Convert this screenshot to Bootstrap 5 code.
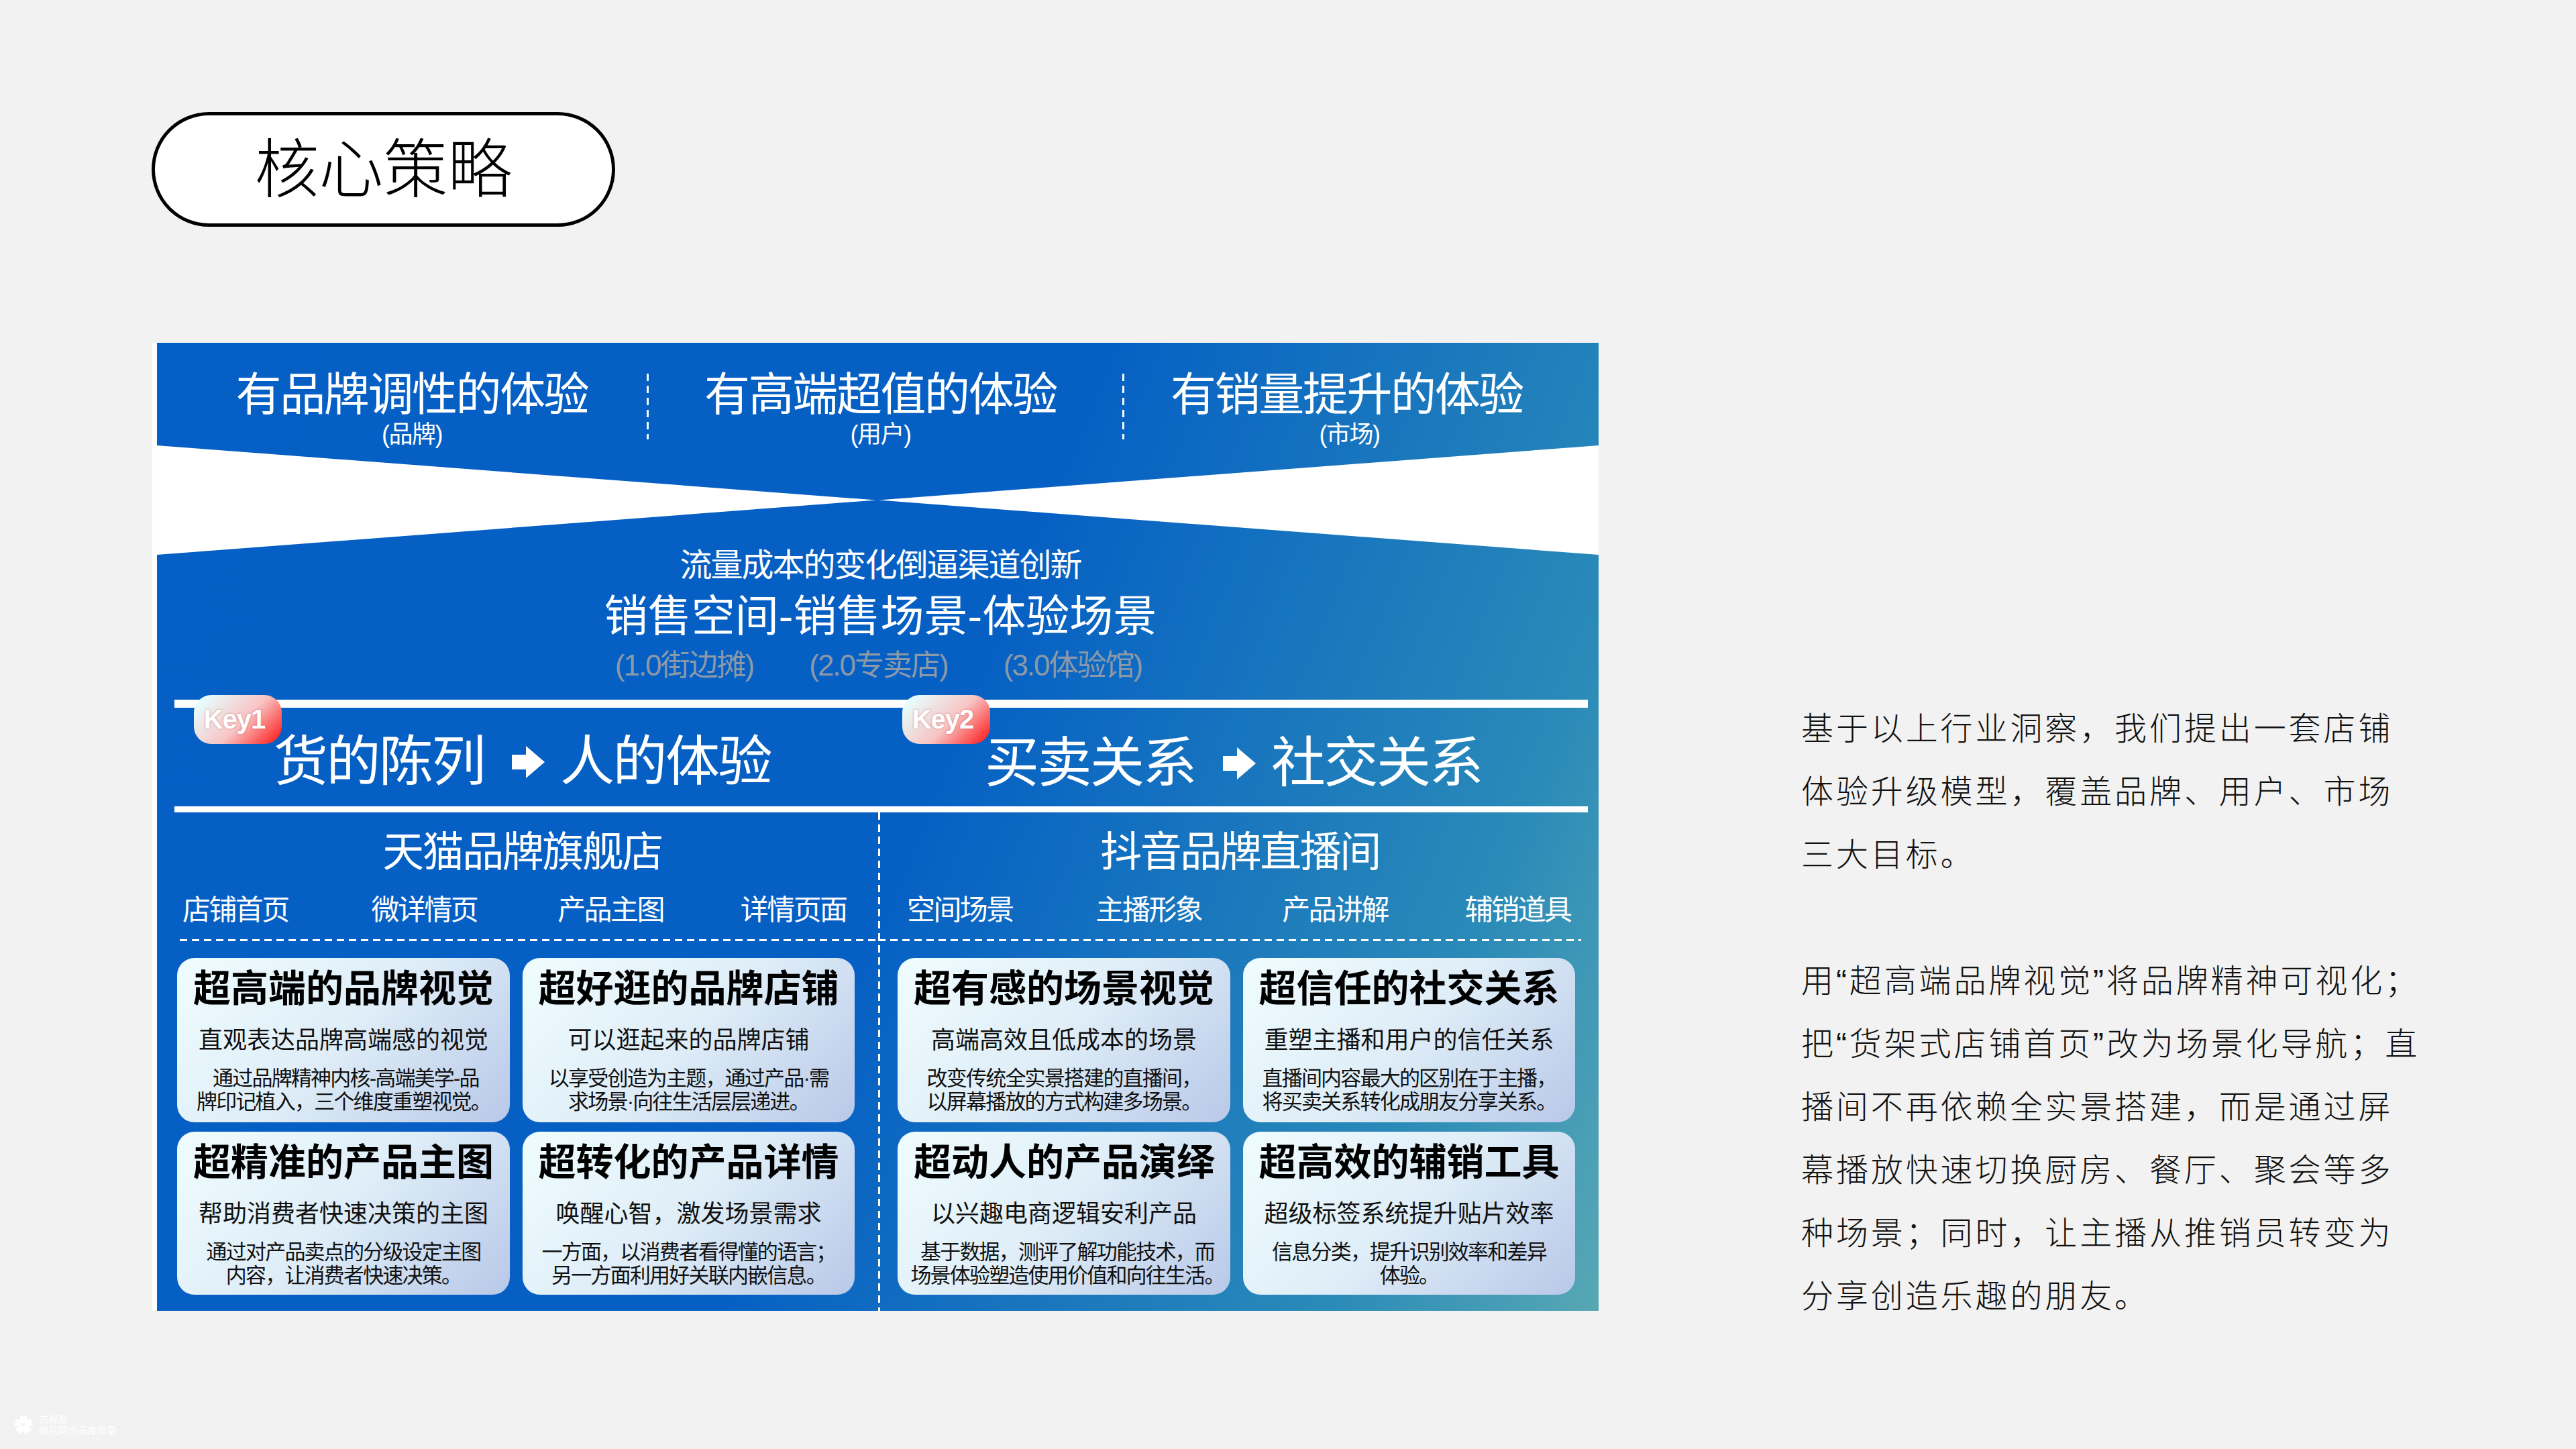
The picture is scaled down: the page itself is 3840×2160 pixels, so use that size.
<!DOCTYPE html>
<html lang="zh-CN">
<head>
    <meta charset="UTF-8">
    <title>核心策略</title>
    <link href="https://cdn.jsdelivr.net/npm/bootstrap@5.3.0/dist/css/bootstrap.min.css" rel="stylesheet">
    <style>
        body { background: #f2f2f2; font-family: "Liberation Sans", "Noto Sans CJK SC", sans-serif; color: #111; }
        .slide { width: 3840px; height: 2160px; padding: 167px 0 0 226px; position: relative; overflow: hidden; }
        .pill { width: 691px; height: 171px; border: 5px solid #000; border-radius: 86px; background: #fff; font-size: 96px; font-weight: 300; color: #000; }
        .body-row { margin-top: 173px; }

        .dgm { width: 2156px; height: 1443px; margin-left: 1px; border-left: 7px solid #fff; color: #fff;
               background: linear-gradient(112deg, #065fc4 0%, #0660c4 52%, #2a8ab8 85%, #58a8b4 100%); }
        .promise { height: 153px; }
        .promise > div { height: 153px; padding-top: 43px; line-height: 1; }
        .promise .big { font-size: 68px; letter-spacing: -2.4px; }
        .promise .tiny { font-size: 36px; letter-spacing: -1.5px; margin-top: 8px; }
        .cell1 { width: 730px; padding-left: 30px; }
        .cell2 { width: 709px; padding-right: 12px; }
        .cell3 { width: 709px; padding-right: 40px; }
        .cell3 .tiny { padding-left: 8px; }
        .vdash { position: relative; }
        .vdash::before, .shop.right::before { content: ""; position: absolute; left: 0; width: 3px;
            background: repeating-linear-gradient(180deg, #fff 0 11px, transparent 11px 18px); }
        .vdash::before { top: 46px; height: 98px; }
        .band { display: block; width: 2149px; height: 163px; }

        .shift { display: flow-root; height: 216px; padding-left: 8px; line-height: 1; }
        .shift .l1 { font-size: 48px; letter-spacing: -2px; margin-top: -8px; }
        .shift .l2 { font-size: 65px; letter-spacing: 0; margin-top: 19px; }
        .shift .l3 { font-size: 44px; letter-spacing: -2px; color: #8b99a8; margin-top: 19px; padding-right: 6px; gap: 83px; }

        .keys { height: 168px; margin: 0 16px 0 26px; border-top: 12px solid #fff; border-bottom: 9px solid #fff; position: relative; }
        .keytxt { position: absolute; display: flex; align-items: center; font-size: 81px; letter-spacing: -2.5px; line-height: 1; top: 40px; }
        .keytxt svg { width: 49px; height: 48px; margin: 0 23px 0 41px; }
        .k1 { left: 148px; }
        .k2 { left: 1208px; top: 42px; }
        .keytag { position: absolute; top: -19px; width: 131px; height: 73px; border-radius: 26px; padding-right: 10px; font: bold 40px "Liberation Sans", sans-serif; letter-spacing: -1px; text-shadow: 0 0 3px rgba(190, 60, 60, .6);
                  background: linear-gradient(135deg, #e6fdfd 10%, #f8c4c4 55%, #ff0f0f 100%); }
        .t1 { left: 29px; }
        .t2 { left: 1085px; }

        .shops { height: 743px; }
        .shop { width: 1075px; }
        .shop.right { width: 1074px; position: relative; }
        .shop.right::before { top: 0; bottom: 0; }
        .shop-name { font-size: 62px; letter-spacing: -2.5px; line-height: 1; padding-top: 29px; text-align: center; }
        .left .shop-name { padding-left: 14px; }
        .right .shop-name { padding-left: 5px; }
        .tabs { margin-top: 34px; height: 67px; line-height: 1; font-size: 42px; letter-spacing: -2.6px;
            background: repeating-linear-gradient(90deg, #fff 0 11px, transparent 11px 18px) bottom / 100% 3px no-repeat; }
        .tabs span { margin-left: 120px; }
        .tabs span:nth-child(1) { margin-left: 0; }
        .tabs span:nth-child(2) { margin-left: 124px; }
        .tabs span:nth-child(4) { margin-left: 115px; }
        .left .tabs { margin-left: 34px; padding-left: 4px; }
        .right .tabs { margin-right: 26px; padding-left: 43px; }
        .tiles { display: grid; grid-template-columns: 496px 495px; grid-template-rows: 245px 243px; column-gap: 19px; row-gap: 14px; margin-top: 25px; }
        .left .tiles { margin-left: 30px; }
        .right .tiles { margin-left: 29px; }
        .tile { border: 0; border-radius: 26px; color: #111; line-height: 1; background: linear-gradient(135deg, #f0fdff 0%, #deedf7 50%, #b8c8e8 100%); }
        .tile h5 { font-size: 56px; font-weight: 700; margin: 12px 0 0; color: #000; letter-spacing: 0; }
        .tile .sub { font-size: 36px; margin-top: 26px; }
        .tile .det { font-size: 31px; letter-spacing: -1.8px; line-height: 35px; margin-top: 21px; white-space: nowrap; }
        .tile .det.nudge { padding-left: 10px; }

        .copy { margin: 529px 0 0 302px; font-size: 48px; font-weight: 300; letter-spacing: 3.9px; line-height: 94px; color: #111; white-space: nowrap; }
        .stamp { position: absolute; left: 20px; top: 2108px; color: #fff; font-size: 14px; line-height: 16px; letter-spacing: .5px; }
        .stamp svg { width: 30px; height: 30px; }
    </style>
</head>
<body>
<div class="slide">
    <div class="pill d-flex align-items-center justify-content-center">核心策略</div>

    <div class="body-row d-flex align-items-start">
        <div class="dgm flex-shrink-0">
            <div class="promise d-flex text-center">
                <div class="cell1"><div class="big">有品牌调性的体验</div><div class="tiny">(品牌)</div></div>
                <div class="cell2 vdash"><div class="big">有高端超值的体验</div><div class="tiny">(用户)</div></div>
                <div class="cell3 vdash"><div class="big">有销量提升的体验</div><div class="tiny">(市场)</div></div>
            </div>

            <svg class="band" viewBox="0 0 2149 163">
                <polygon points="0,0 1072,81.5 0,163" fill="#fff"/>
                <polygon points="2149,0 1076,81.5 2149,163" fill="#fff"/>
            </svg>

            <div class="shift text-center">
                <div class="l1">流量成本的变化倒逼渠道创新</div>
                <div class="l2">销售空间-销售场景-体验场景</div>
                <div class="l3 d-flex justify-content-center">
                    <span>(1.0街边摊)</span><span>(2.0专卖店)</span><span>(3.0体验馆)</span>
                </div>
            </div>

            <div class="keys">
                <div class="keytag t1 d-flex align-items-center justify-content-center">Key1</div>
                <div class="keytxt k1">货的陈列
                    <svg viewBox="0 0 49 48"><polygon points="0,13 21,13 21,0 49,24 21,48 21,35 0,35" fill="#fff"/></svg>
                    人的体验</div>
                <div class="keytag t2 d-flex align-items-center justify-content-center">Key2</div>
                <div class="keytxt k2">买卖关系
                    <svg viewBox="0 0 49 48"><polygon points="0,13 21,13 21,0 49,24 21,48 21,35 0,35" fill="#fff"/></svg>
                    社交关系</div>
            </div>

            <div class="shops d-flex">
                <div class="shop left">
                    <div class="shop-name">天猫品牌旗舰店</div>
                    <div class="tabs d-flex">
                        <span>店铺首页</span><span>微详情页</span><span>产品主图</span><span>详情页面</span>
                    </div>
                    <div class="tiles">
                        <div class="card tile text-center">
                            <h5>超高端的品牌视觉</h5>
                            <div class="sub">直观表达品牌高端感的视觉</div>
                            <div class="det">&nbsp;通过品牌精神内核-高端美学-品<br>牌印记植入，三个维度重塑视觉。</div>
                        </div>
                        <div class="card tile text-center">
                            <h5>超好逛的品牌店铺</h5>
                            <div class="sub">可以逛起来的品牌店铺</div>
                            <div class="det">以享受创造为主题，通过产品·需<br>求场景·向往生活层层递进。</div>
                        </div>
                        <div class="card tile text-center">
                            <h5>超精准的产品主图</h5>
                            <div class="sub">帮助消费者快速决策的主图</div>
                            <div class="det">通过对产品卖点的分级设定主图<br>内容，让消费者快速决策。</div>
                        </div>
                        <div class="card tile text-center">
                            <h5>超转化的产品详情</h5>
                            <div class="sub">唤醒心智，激发场景需求</div>
                            <div class="det">一方面，以消费者看得懂的语言；<br>另一方面利用好关联内嵌信息。</div>
                        </div>
                    </div>
                </div>
                <div class="shop right">
                    <div class="shop-name">抖音品牌直播间</div>
                    <div class="tabs d-flex">
                        <span>空间场景</span><span>主播形象</span><span>产品讲解</span><span>辅销道具</span>
                    </div>
                    <div class="tiles">
                        <div class="card tile text-center">
                            <h5>超有感的场景视觉</h5>
                            <div class="sub">高端高效且低成本的场景</div>
                            <div class="det">改变传统全实景搭建的直播间，<br>以屏幕播放的方式构建多场景。</div>
                        </div>
                        <div class="card tile text-center">
                            <h5>超信任的社交关系</h5>
                            <div class="sub">重塑主播和用户的信任关系</div>
                            <div class="det">直播间内容最大的区别在于主播，<br>将买卖关系转化成朋友分享关系。</div>
                        </div>
                        <div class="card tile text-center">
                            <h5>超动人的产品演绎</h5>
                            <div class="sub">以兴趣电商逻辑安利产品</div>
                            <div class="det nudge">基于数据，测评了解功能技术，而<br>场景体验塑造使用价值和向往生活。</div>
                        </div>
                        <div class="card tile text-center">
                            <h5>超高效的辅销工具</h5>
                            <div class="sub">超级标签系统提升贴片效率</div>
                            <div class="det">信息分类，提升识别效率和差异<br>体验。</div>
                        </div>
                    </div>
                </div>
            </div>
        </div>

        <div class="copy">
            基于以上行业洞察，我们提出一套店铺<br>
            体验升级模型，覆盖品牌、用户、市场<br>
            三大目标。<br>
            <br>
            用“超高端品牌视觉”将品牌精神可视化；<br>
            把“货架式店铺首页”改为场景化导航；直<br>
            播间不再依赖全实景搭建，而是通过屏<br>
            幕播放快速切换厨房、餐厅、聚会等多<br>
            种场景；同时，让主播从推销员转变为<br>
            分享创造乐趣的朋友。
        </div>
    </div>

    <div class="stamp d-flex align-items-center gap-2">
        <svg viewBox="0 0 30 30"><g fill="#fff"><path id="pt" d="M15 13 C11 11 9 8 10 3 C11 1 13 1 14 2 L15 4 L16 2 C17 1 19 1 20 3 C21 8 19 11 15 13Z"/><use href="#pt" transform="rotate(72 15 15)"/><use href="#pt" transform="rotate(144 15 15)"/><use href="#pt" transform="rotate(216 15 15)"/><use href="#pt" transform="rotate(288 15 15)"/></g></svg>
        <div>杰视帮<br>梅花网作品库收录</div>
    </div>
</div>
<script src="https://cdn.jsdelivr.net/npm/bootstrap@5.3.0/dist/js/bootstrap.bundle.min.js"></script>
</body>
</html>
